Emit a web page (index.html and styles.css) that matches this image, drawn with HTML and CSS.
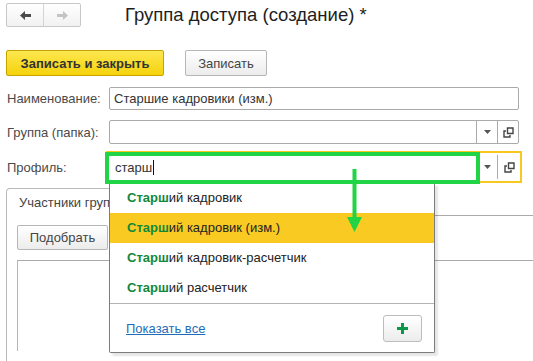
FILE: index.html
```html
<!DOCTYPE html>
<html lang="ru">
<head>
    <meta charset="UTF-8">
    <title>Группа доступа (создание)</title>
    <link rel="stylesheet" href="styles.css">
</head>
<body>
    <!-- Top bar: history buttons and form title -->
    <header class="topbar">
        <div class="nav">
            <span class="nav-btn">
                <svg width="11" height="9" viewBox="0 0 11 9"><path d="M0 4.5 L5 0 V3 H11 V6 H5 V9 Z" fill="#4a4a4a"/></svg>
            </span>
            <span class="nav-btn">
                <svg width="11" height="9" viewBox="0 0 11 9"><path d="M11 4.5 L6 0 V3 H0 V6 H6 V9 Z" fill="#c4c4c4"/></svg>
            </span>
        </div>
        <h1 class="title">Группа доступа (создание) *</h1>
    </header>

    <!-- Command bar -->
    <div class="commands">
        <span class="btn btn-primary">Записать и закрыть</span>
        <span class="btn btn-save">Записать</span>
    </div>

    <!-- Form fields -->
    <div class="form">
        <div class="row">
            <span class="label">Наименование:</span>
            <div class="field"><span class="field-text">Старшие кадровики (изм.)</span></div>
        </div>
        <div class="row">
            <span class="label">Группа (папка):</span>
            <div class="field field-choice">
                <span class="field-text"></span>
                <span class="field-btn">
                    <svg width="7" height="4" viewBox="0 0 7 4"><path d="M0 0 H7 L3.5 4 Z" fill="#555"/></svg>
                </span>
                <span class="field-btn">
                    <svg width="11" height="11" viewBox="0 0 11 11"><path d="M4.5 1 H10 V6.5 H4.5 Z" fill="none" stroke="#444" stroke-width="1.4"/><path d="M3 4 H1 V10 H7 V8" fill="none" stroke="#444" stroke-width="1.4"/></svg>
                </span>
            </div>
        </div>
        <div class="row row-focus">
            <span class="label">Профиль:</span>
            <div class="field field-choice field-focus">
                <span class="field-text">старш<span class="caret"></span></span>
                <span class="field-btn">
                    <svg width="7" height="4" viewBox="0 0 7 4"><path d="M0 0 H7 L3.5 4 Z" fill="#555"/></svg>
                </span>
                <span class="field-btn field-btn-open">
                    <svg width="11" height="11" viewBox="0 0 11 11"><path d="M4.5 1 H10 V6.5 H4.5 Z" fill="none" stroke="#444" stroke-width="1.4"/><path d="M3 4 H1 V10 H7 V8" fill="none" stroke="#444" stroke-width="1.4"/></svg>
                </span>

                <!-- Quick choice list -->
                <div class="popup">
                    <div class="popup-item"><b>Старш</b>ий кадровик</div>
                    <div class="popup-item popup-item-active"><b>Старш</b>ий кадровик (изм.)</div>
                    <div class="popup-item"><b>Старш</b>ий кадровик-расчетчик</div>
                    <div class="popup-item"><b>Старш</b>ий расчетчик</div>
                    <div class="popup-footer">
                        <a class="popup-link" href="#">Показать все</a>
                        <span class="plus-btn">
                            <svg width="11" height="11" viewBox="0 0 11 11"><path d="M4 0 H7 V4 H11 V7 H7 V11 H4 V7 H0 V4 H4 Z" fill="#0b9847"/></svg>
                        </span>
                    </div>
                </div>

                <!-- Annotation: highlight and arrow -->
                <div class="mark-box"></div>
                <svg class="mark-arrow" width="15" height="63" viewBox="0 0 15 63">
                    <rect x="5.5" y="0" width="4" height="50" fill="#21d445"/>
                    <path d="M0 48 H15 L7.5 63 Z" fill="#21d445"/>
                </svg>
            </div>
        </div>
    </div>

    <!-- Tabs -->
    <div class="tabs">
        <div class="tab-strip">
            <span class="tab">Участники группы</span>
            <span class="tab-fill"></span>
        </div>
        <div class="tab-body">
            <span class="btn btn-pick">Подобрать</span>
            <div class="list"></div>
        </div>
    </div>
</body>
</html>
```

FILE: styles.css
```css
/* Page */
body {
    margin: 0;
    width: 533px;
    height: 361px;
    overflow: hidden;
    background: #fff;
    color: #333;
    font-family: "Liberation Sans", Arial, sans-serif;
    font-size: 13px;
}

/* Top bar */
.topbar {
    display: flex;
    align-items: center;
    padding: 3px 0 0 6px;
}

.nav {
    display: flex;
    width: 75px;
    height: 24px;
    box-sizing: border-box;
    border: 1px solid #c8c8c8;
    border-radius: 2px;
    background: linear-gradient(#fff, #f1f1f1);
}

.nav-btn {
    flex: 1;
    display: flex;
    align-items: center;
    justify-content: center;
}

.nav-btn + .nav-btn {
    border-left: 1px solid #d4d4d4;
}

.title {
    margin: 0 0 0 44px;
    font-size: 18.5px;
    font-weight: normal;
    color: #1e1e1e;
}

/* Buttons */
.commands {
    display: flex;
    gap: 21px;
    margin-top: 23px;
    padding-left: 6px;
}

.btn {
    display: flex;
    align-items: center;
    justify-content: center;
    box-sizing: border-box;
    height: 26px;
    border: 1px solid #b6b6b6;
    border-radius: 2px;
    background: linear-gradient(#fff, #ececec);
    color: #444;
}

.btn-primary {
    width: 158px;
    border-color: #c5a400;
    background: linear-gradient(#fde74f, #f5d20c);
    color: #333;
    font-weight: bold;
}

.btn-save {
    width: 82px;
}

/* Form */
.form {
    margin-top: 11px;
    padding-left: 7px;
}

.row {
    display: grid;
    grid-template-columns: 102px 410px;
    align-items: center;
}

.row + .row {
    margin-top: 10px;
}

.row + .row-focus {
    margin-top: 7px;
}

.label {
    color: #4a4a4a;
}

.field {
    display: flex;
    box-sizing: border-box;
    height: 23px;
    border: 1px solid #aaa;
    border-radius: 2px;
    background: #fff;
}

.field-choice {
    height: 24px;
}

.field-text {
    flex: 1;
    display: flex;
    align-items: center;
    padding-left: 4px;
    color: #333;
}

.field-btn {
    display: flex;
    align-items: center;
    justify-content: center;
    width: 20px;
    border-left: 1px solid #aaa;
}

/* Focused field */
.field-focus {
    position: relative;
    width: 416px;
    height: 32px;
    margin-left: -3px;
    border: 2px solid #f8c81e;
    border-radius: 0;
}

.field-focus .field-text {
    padding-left: 7px;
}

.field-focus .field-btn {
    border-left: none;
}

.field-focus .field-btn-open {
    width: 22px;
    margin: 2px 0;
    border-left: 1px solid #aaa;
}

.caret {
    display: inline-block;
    width: 1px;
    height: 15px;
    margin-left: 1px;
    background: #111;
}

/* Quick choice popup */
.popup {
    position: absolute;
    left: 1px;
    top: 30px;
    z-index: 3;
    width: 326px;
    box-sizing: border-box;
    border: 1px solid #7c7c7c;
    border-top: none;
    border-radius: 0 0 2px 2px;
    background: #fff;
    box-shadow: 3px 3px 2px rgba(0, 0, 0, 0.1);
}

.popup-item {
    height: 30px;
    line-height: 30px;
    padding-left: 17px;
    color: #222;
}

.popup-item b {
    color: #10893b;
}

.popup-item-active {
    background: #f9cb22;
}

.popup-footer {
    display: flex;
    align-items: center;
    justify-content: space-between;
    height: 48px;
    padding: 0 12px 0 16px;
    border-top: 1px solid #b4b4b4;
}

.popup-link {
    color: #1f6db8;
    text-decoration: underline;
}

.plus-btn {
    display: flex;
    align-items: center;
    justify-content: center;
    box-sizing: border-box;
    width: 39px;
    height: 27px;
    border: 1px solid #bdbdbd;
    border-radius: 3px;
    background: linear-gradient(#fff, #ececec);
}

/* Annotation */
.mark-box {
    position: absolute;
    left: -3px;
    top: -1px;
    z-index: 4;
    width: 375px;
    height: 32px;
    box-sizing: border-box;
    border: 4px solid #21d445;
}

.mark-arrow {
    position: absolute;
    left: 239px;
    top: 16px;
    z-index: 5;
}

/* Tabs */
.tabs {
    margin: 5px 0 0 6px;
}

.tab-strip {
    display: flex;
}

.tab {
    height: 28px;
    box-sizing: border-box;
    padding: 6px 12px 0;
    border: 1px solid #b9b9b9;
    border-bottom: none;
    border-radius: 4px 4px 0 0;
    color: #444;
}

.tab-fill {
    flex: 1;
    border-bottom: 1px solid #aaa;
}

.tab-body {
    height: 136px;
    padding: 9px 0 0 10px;
    border-left: 1px solid #b9b9b9;
}

.btn-pick {
    width: 91px;
    height: 25px;
}

.list {
    height: 90px;
    margin-top: 10px;
    border-top: 1px solid #aaa;
    border-left: 1px solid #b5b5b5;
}
```
